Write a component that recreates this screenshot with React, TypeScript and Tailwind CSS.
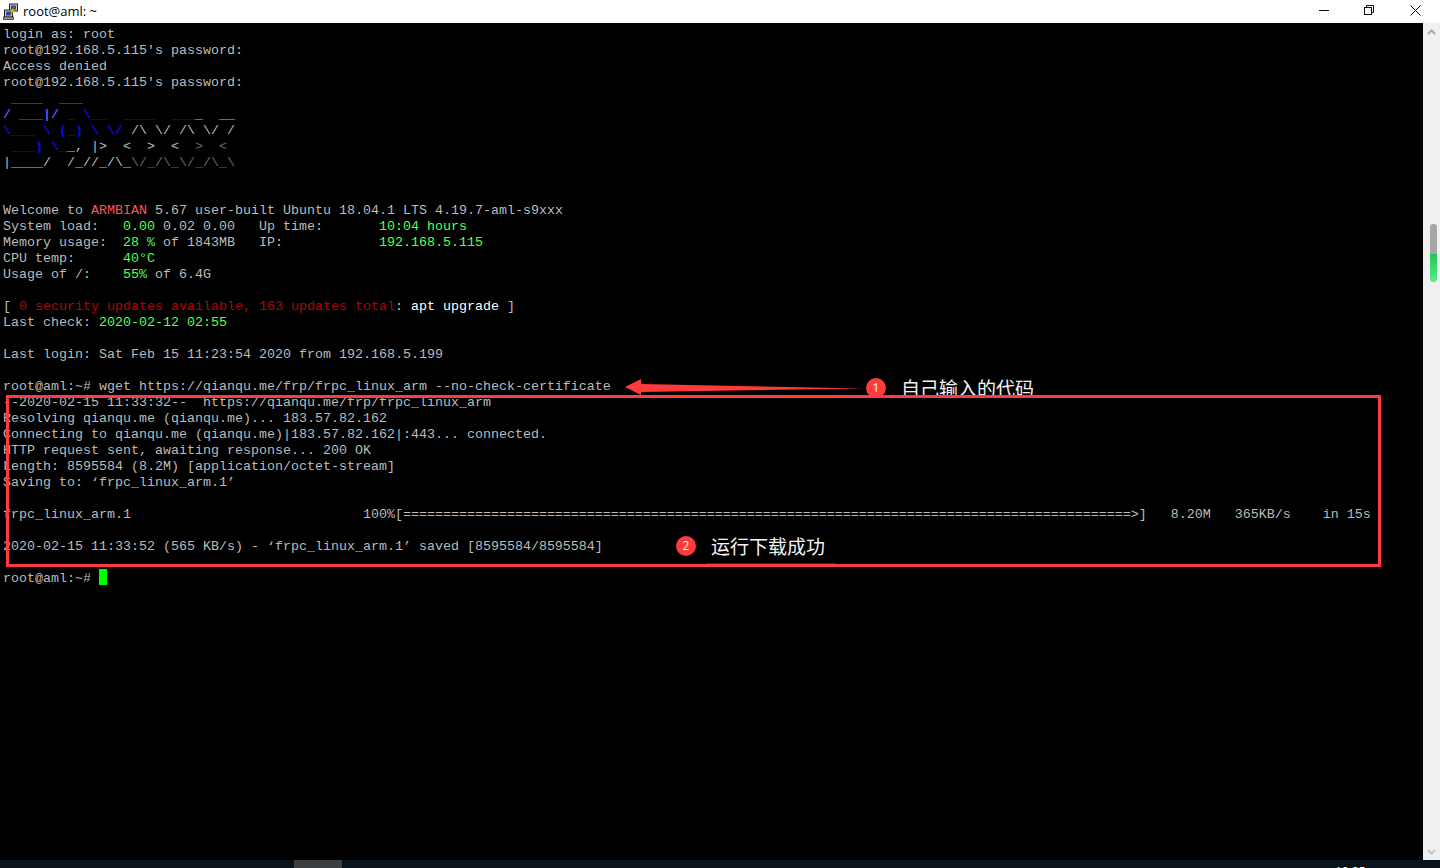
const gray = 'text-[#bbbbbb]'
const green = 'text-[#55ff55]'
const red = 'text-[#ff5555]'
const dred = 'text-[#bb0000]'
const white = 'text-white'
const bright = 'text-[#5555ff] font-bold'
const blue = 'text-[#0a0aee] font-bold'
const dim = 'text-[#666666]'

type Seg = [string, string]

// every row of the terminal, 16px high, 8px per character
const rows: Seg[][] = [
  [['login as: root', gray]],
  [["root@192.168.5.115's password:", gray]],
  [['Access denied', gray]],
  [["root@192.168.5.115's password:", gray]],
  // logo
  [[' ____  ', bright], ['___', bright]],
  [['/ ___|/', bright], [' _ \\__  ____  ___', blue], ['_  __', gray]],
  [['\\___ \\ (_) \\ \\/', blue], [' /\\ \\/ /\\ \\/ /', gray]],
  [[' ___) \\_', blue], ['_, |>  <  >  <', gray], ['  ', gray], ['>  <', dim]],
  [['|____/  /_//_/\\_', gray], ['\\/_/\\_\\/_/\\_\\', dim]],
  [],
  [],
  [['Welcome to ', gray], ['ARMBIAN', red], [' 5.67 user-built Ubuntu 18.04.1 LTS 4.19.7-aml-s9xxx', gray]],
  [['System load:   ', gray], ['0.00', green], [' 0.02 0.00   Up time:       ', gray], ['10:04 hours', green]],
  [['Memory usage:  ', gray], ['28 %', green], [' of 1843MB   IP:            ', gray], ['192.168.5.115', green]],
  [['CPU temp:      ', gray], ['40°C', green]],
  [['Usage of /:    ', gray], ['55%', green], [' of 6.4G', gray]],
  [],
  [['[ ', gray], ['0 security updates available, 163 updates total', dred], [': ', gray], ['apt upgrade', white], [' ]', gray]],
  [['Last check: ', gray], ['2020-02-12 02:55', green]],
  [],
  [['Last login: Sat Feb 15 11:23:54 2020 from 192.168.5.199', gray]],
  [],
  [['root@aml:~# wget https://qianqu.me/frp/frpc_linux_arm --no-check-certificate', gray]],
  [['--2020-02-15 11:33:32--  https://qianqu.me/frp/frpc_linux_arm', gray]],
  [['Resolving qianqu.me (qianqu.me)... 183.57.82.162', gray]],
  [['Connecting to qianqu.me (qianqu.me)|183.57.82.162|:443... connected.', gray]],
  [['HTTP request sent, awaiting response... 200 OK', gray]],
  [['Length: 8595584 (8.2M) [application/octet-stream]', gray]],
  [['Saving to: ‘frpc_linux_arm.1’', gray]],
  [],
  [['frpc_linux_arm.1' + ' '.repeat(29) + '100%[' + '='.repeat(91) + '>]   8.20M   365KB/s    in 15s', gray]],
  [],
  [['2020-02-15 11:33:52 (565 KB/s) - ‘frpc_linux_arm.1’ saved [8595584/8595584]', gray]],
  [],
]

function PuttyIcon() {
  return (
    <svg width="16" height="17" viewBox="0 0 16 17" className="shrink-0">
      <rect x="6.5" y="1" width="8" height="7" fill="#c8c8c8" stroke="#222" />
      <rect x="8" y="2.500" width="5" height="4" fill="#2a3fb0" />
      <rect x="1.5" y="7" width="8" height="7" fill="#c8c8c8" stroke="#222" />
      <rect x="3" y="8.500" width="5" height="4" fill="#2a3fb0" />
      <rect x="0.5" y="14" width="10" height="2.500" fill="#9a9a9a" stroke="#222" strokeWidth="0.7" />
      <path d="M12 3 L7 8 L9.500 8.500 L6 13 L12 7.500 L9.500 7 Z" fill="#f5d90a" stroke="#7a6a00" strokeWidth="0.4" />
    </svg>
  )
}

function TitleBar() {
  return (
    <div className="flex h-[23px] shrink-0 items-center bg-white">
      <div className="ml-[3px]">
        <PuttyIcon />
      </div>
      <span className="ml-[4px] font-['Open_Sans',sans-serif] text-[13px] text-black">root@aml: ~</span>
      <div className="ml-auto mr-[2px] flex self-start">
        <button className="flex h-[20px] w-[44px] items-center justify-center">
          <svg width="10" height="10" viewBox="0 0 10 10">
            <path d="M0 5.500h10" stroke="#111" strokeWidth="1" />
          </svg>
        </button>
        <button className="flex h-[20px] w-[46px] items-center justify-center">
          <svg width="10" height="10" viewBox="0 0 10 10" fill="none" stroke="#111" strokeWidth="1">
            <rect x="0.5" y="2.500" width="7" height="7" />
            <path d="M2.500 2.500V0.500h7v7H7.500" />
          </svg>
        </button>
        <button className="flex h-[20px] w-[46px] items-center justify-center">
          <svg width="11" height="11" viewBox="0 0 11 11" stroke="#111" strokeWidth="1">
            <path d="M0.500 0.500l10 10M10.500 0.500l-10 10" />
          </svg>
        </button>
      </div>
    </div>
  )
}

function Scrollbar() {
  return (
    <div className="flex w-[17px] shrink-0 flex-col items-center bg-[#f0f0f0]">
      <svg width="9" height="6" viewBox="0 0 9 6" className="mt-[6px]" fill="none" stroke="#a8a8a8" strokeWidth="2">
        <path d="M1 5l3.500-3.500L8 5" />
      </svg>
      <div className="ml-[4px] mt-[189px] flex h-[58px] w-[7px] flex-col overflow-hidden rounded-[3px]">
        <div className="h-[30px] bg-[#a6a6a6]" />
        <div className="flex-1 bg-gradient-to-b from-[#1fc45c] to-[#55ee88]" />
      </div>
      <svg width="9" height="6" viewBox="0 0 9 6" className="mb-[5px] mt-auto" fill="none" stroke="#c4c4c4" strokeWidth="2">
        <path d="M1 1l3.500 3.500L8 1" />
      </svg>
    </div>
  )
}

function Terminal() {
  return (
    <div className="min-w-0 flex-1 overflow-hidden bg-black pl-[3px] pt-[4px] font-['Liberation_Mono',monospace] text-[13.33px] leading-[16px]">
      {rows.map((row, i) => (
        <div key={i} className="h-[16px] whitespace-pre">
          {row.map((seg, j) => (
            <span key={j} className={seg[1]}>
              {seg[0]}
            </span>
          ))}
        </div>
      ))}
      <div className="flex h-[16px] whitespace-pre text-[#bbbbbb]">
        <span>root@aml:~# </span>
        <span className="mt-[-2px] h-[16px] w-[8px] bg-[#00ff00]" />
      </div>
    </div>
  )
}

function Annotations() {
  const cjk = "font-['Noto_Sans_CJK_SC',sans-serif] text-[19px] leading-[24px] text-[#f4f4f4]"
  const badge =
    "flex h-[20px] w-[20px] items-center justify-center rounded-full bg-[#ff3b3b] font-['Open_Sans',sans-serif] text-[12px] text-white"
  return (
    <>
      {/* arrow */}
      <svg className="absolute left-[620px] top-[375px]" width="250" height="24" viewBox="0 0 250 24">
        <path d="M5 12 L21 4 L21 9 L245 13.500 L21 17 L21 20 Z" fill="#ff3b3b" />
      </svg>
      {/* first note, its lower edge is cut by the box */}
      <div className="absolute left-[866px] top-[376px] flex h-[19px] items-start overflow-hidden">
        <div className={`${badge} mt-[2px]`}>1</div>
        <div className={`${cjk} ml-[15px] mt-0`}>自己输入的代码</div>
      </div>
      {/* red box */}
      <div className="absolute left-[6px] top-[395px] h-[172px] w-[1375px] border-[3px] border-[#ff3b3b]" />
      {/* second note */}
      <div className="absolute left-[676px] top-[534px] flex items-center">
        <div className={badge}>2</div>
        <div className={`${cjk} ml-[15px]`}>运行下载成功</div>
      </div>
      <div className="absolute left-[706px] top-[563px] h-px w-[130px] bg-[#2a2a2a]" />
    </>
  )
}

function Taskbar() {
  return (
    <div className="flex h-[8px] shrink-0 overflow-hidden bg-[#0a1319]">
      <div className="ml-[294px] h-[8px] w-[48px] bg-[#3c3f42]" />
      <span className="ml-[993px] mt-[5px] font-['Open_Sans',sans-serif] text-[12px] leading-[14px] text-white">10:25</span>
    </div>
  )
}

export default function App() {
  return (
    <div className="relative flex h-[868px] w-[1440px] flex-col overflow-hidden bg-black">
      <TitleBar />
      <div className="flex min-h-0 flex-1">
        <Terminal />
        <Scrollbar />
      </div>
      <Taskbar />
      <Annotations />
    </div>
  )
}
